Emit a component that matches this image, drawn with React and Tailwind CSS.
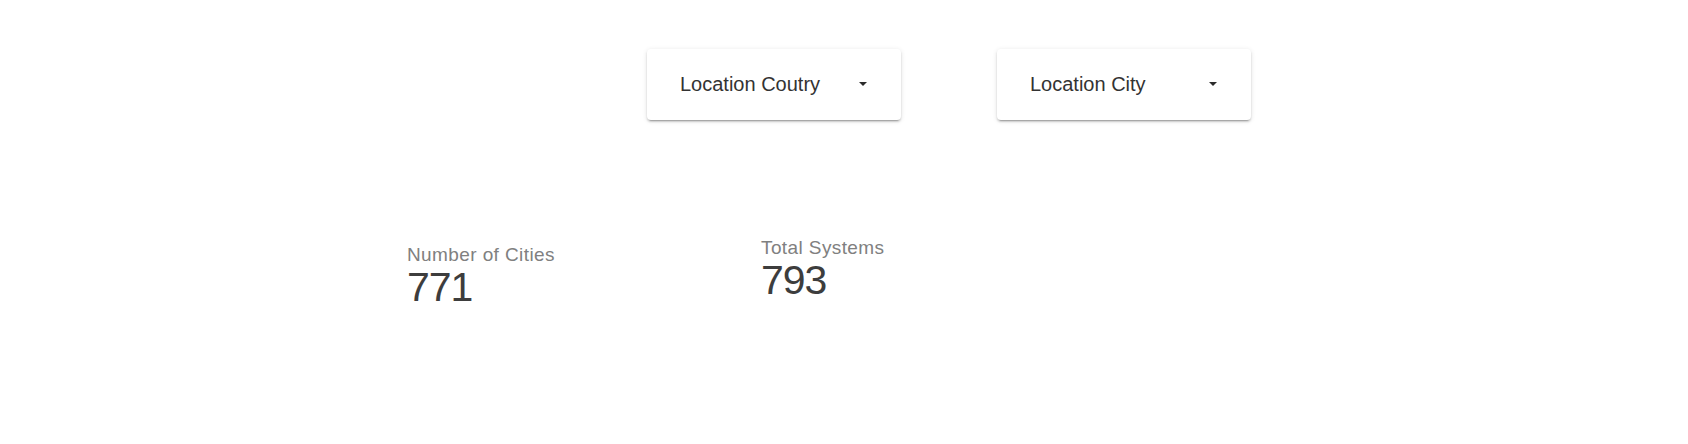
import React from 'react';

const Dropdown = ({ label }) => (
  <div className="w-[254px] h-[71px] bg-white rounded-[4px] shadow-[0px_3px_1px_-2px_rgba(0,0,0,0.2),0px_2px_2px_0px_rgba(0,0,0,0.14),0px_1px_5px_0px_rgba(0,0,0,0.12)] flex items-center justify-between pl-[33px] pr-[34px] cursor-pointer">
    <span className="text-[20px] leading-[24px] text-[#333333] mb-[2px]">{label}</span>
    <svg width="8" height="4" viewBox="0 0 8 4" className="mb-[1px]">
      <polygon points="0,0 8,0 4,4" fill="#2b2b2b" />
    </svg>
  </div>
);

const Stat = ({ label, value, className = '' }) => (
  <div className={className}>
    <div className="text-[19px] leading-[22px] tracking-[0.4px] text-[#808080]">{label}</div>
    <div className="text-[41px] leading-[41px] tracking-[-1px] mt-[1px] text-[#3d3d3d]">{value}</div>
  </div>
);

export default function App() {
  return (
    <div className="w-[1688px] h-[444px] bg-white font-['Liberation_Sans',Arial,sans-serif]">
      {/* Filters */}
      <div className="flex pt-[49px] pl-[647px] gap-[96px]">
        <Dropdown label="Location Coutry" />
        <Dropdown label="Location City" />
      </div>

      {/* Stats */}
      <div className="flex items-start pl-[407px] mt-[117px]">
        <Stat label="Number of Cities" value="771" className="w-[354px] mt-[7px]" />
        <Stat label="Total Systems" value="793" />
      </div>
    </div>
  );
}
